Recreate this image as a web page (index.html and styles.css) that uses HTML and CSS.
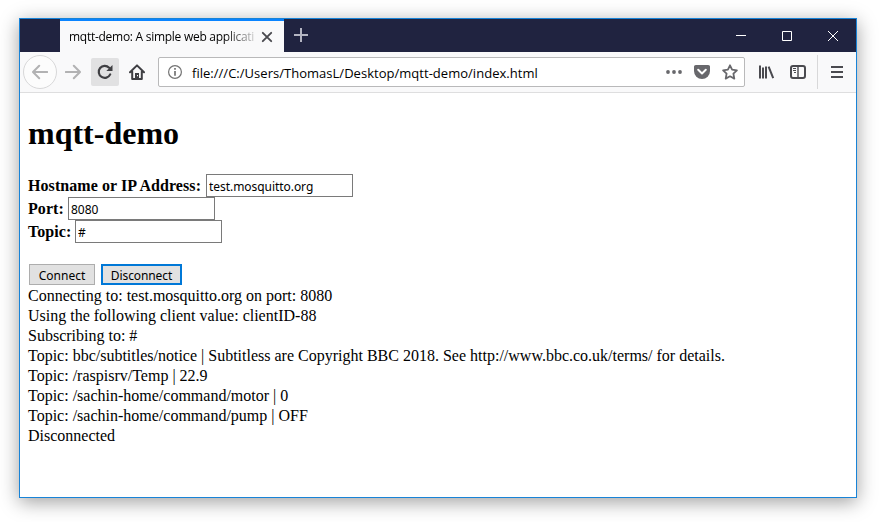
FILE: index.html
```html
<!DOCTYPE html>
<html lang="en">
<head>
<meta charset="utf-8">
<title>mqtt-demo</title>
<link rel="stylesheet" href="styles.css">
</head>
<body>
<div class="window">
  <header class="tabbar">
    <div class="tab">
      <span class="tab-title">mqtt-demo: A simple web applicati</span>
      <svg class="tab-close" width="12" height="12" viewBox="0 0 12 12"><path d="M1.8 1.8l8.4 8.4M10.2 1.8l-8.4 8.4" stroke="#4a4a4f" stroke-width="1.9" stroke-linecap="round"/></svg>
    </div>
    <svg class="new-tab" width="14" height="14" viewBox="0 0 14 14"><path d="M7 0v14M0 7h14" stroke="#b4b5c2" stroke-width="2"/></svg>
    <div class="controls">
      <svg width="10" height="10" viewBox="0 0 10 10"><path d="M0 4.5h10" stroke="#fff"/></svg>
      <svg width="10" height="10" viewBox="0 0 10 10"><path d="M.5.5h9v9h-9z" fill="none" stroke="#fff"/></svg>
      <svg width="10" height="10" viewBox="0 0 10 10"><path d="M0 0l10 10M10 0L0 10" stroke="#fff"/></svg>
    </div>
  </header>
  <nav class="toolbar">
    <div class="back"><svg width="16" height="16" viewBox="0 0 16 16"><path d="M15.2 8H1.2M7.2 1.8L1 8l6.2 6.2" class="arrow"/></svg></div>
    <div class="forward"><svg width="16" height="16" viewBox="0 0 16 16"><path d="M.8 8h14M8.8 1.8L15 8l-6.2 6.2" class="arrow"/></svg></div>
    <div class="reload"><svg width="16" height="16" viewBox="0 0 16 16"><path d="M13.2 10.4A6 6 0 1 1 12.1 3.7" fill="none" stroke="#3f3f43" stroke-width="2.2" stroke-linecap="round"/><path d="M15.5 1v6.1H9.3z" fill="#3f3f43"/></svg></div>
    <div class="home"><svg width="16" height="16" viewBox="0 0 16 16"><path d="M1 8.3L8 1.4l7 6.9M3.2 7.5V15h9.6V7.5" fill="none" stroke="#3f3f43" stroke-width="2" stroke-linecap="round" stroke-linejoin="round"/><path d="M6 9h4v6H6z" fill="#3f3f43"/><path d="M8 11h1v1.3H8z" fill="#fff"/></svg></div>
    <div class="urlbar">
      <svg class="info" width="14" height="14" viewBox="0 0 14 14"><circle cx="7" cy="7" r="6.4" fill="none" stroke="#737373" stroke-width="1.2"/><path d="M7 6v4.8M7 3v1.8" stroke="#737373" stroke-width="1.7"/></svg>
      <span class="url">file:///C:/Users/ThomasL/Desktop/mqtt-demo/index.html</span>
      <svg class="dots" width="16" height="16" viewBox="0 0 16 16"><g fill="#68686c"><circle cx="2" cy="8" r="1.9"/><circle cx="8" cy="8" r="1.9"/><circle cx="14" cy="8" r="1.9"/></g></svg>
      <svg class="pocket" width="16" height="16" viewBox="0 0 16 16"><path d="M1.8 1h12.4C15.3 1 16 1.7 16 2.8V7a8 8 0 0 1-16 0V2.8C0 1.7.7 1 1.8 1z" fill="#68686c"/><path d="M4.2 5.8L8 9.4l3.8-3.6" fill="none" stroke="#fff" stroke-width="2" stroke-linecap="round" stroke-linejoin="round"/></svg>
      <svg class="star" width="16" height="16" viewBox="0 0 16 16"><path d="M8 1.3l2.1 4.3 4.8.7-3.5 3.4.9 4.9L8 12.3l-4.3 2.3.9-4.9L1.1 6.3l4.8-.7z" fill="none" stroke="#68686c" stroke-width="1.8" stroke-linejoin="round"/></svg>
    </div>
    <svg class="library" width="16" height="16" viewBox="0 0 16 16"><path d="M1 1.5v13M4 3.5v11M7 2.5v12M9.6 2.6l4.6 11.6" fill="none" stroke="#4a4a4f" stroke-width="2"/></svg>
    <svg class="sidebar" width="16" height="16" viewBox="0 0 16 16"><rect x="1" y="2" width="14" height="12" rx="2" fill="none" stroke="#4a4a4f" stroke-width="2"/><path d="M8 2v12" stroke="#4a4a4f" stroke-width="1.4"/><path d="M3 4.5h3M3 6.5h3M4 8.5h2" stroke="#4a4a4f"/></svg>
    <div class="menu"><svg width="12" height="12" viewBox="0 0 12 12"><path d="M0 1h12M0 6h12M0 11h12" stroke="#4a4a4f" stroke-width="2"/></svg></div>
  </nav>
  <main class="page">
    <h1>mqtt-demo</h1>
    <form>
      <div class="field"><label class="label-host" for="host">Hostname or IP Address:</label><input id="host" class="host" value="test.mosquitto.org"></div>
      <div class="field"><label class="label-port" for="port">Port:</label><input id="port" value="8080"></div>
      <div class="field"><label class="label-topic" for="topic">Topic:</label><input id="topic" value="#"></div>
      <div class="buttons">
        <button type="button" class="connect">Connect</button>
        <button type="button" class="disconnect">Disconnect</button>
      </div>
    </form>
    <div class="log">
      <div>Connecting to: test.mosquitto.org on port: 8080</div>
      <div>Using the following client value: clientID-88</div>
      <div>Subscribing to: #</div>
      <div>Topic: bbc/subtitles/notice | Subtitless are Copyright BBC 2018. See http://www.bbc.co.uk/terms/ for details.</div>
      <div>Topic: /raspisrv/Temp | 22.9</div>
      <div>Topic: /sachin-home/command/motor | 0</div>
      <div>Topic: /sachin-home/command/pump | OFF</div>
      <div>Disconnected</div>
    </div>
  </main>
</div>
</body>
</html>
```
FILE: styles.css
```css
* { box-sizing: border-box; }
body {
  margin: 0;
  padding: 18px 23px 24px 19px;
  height: 522px;
  background: #fff;
  overflow: hidden;
  font-family: "Open Sans", "Noto Sans", sans-serif;
  color: #000;
}
svg { display: block; flex: none; }
.window {
  width: 838px;
  height: 480px;
  border: 1px solid #1883d7;
  background: #fff;
  box-shadow: 0 4px 18px rgba(0, 0, 0, .38);
}
.tabbar { display: flex; height: 33px; background: #202340; padding-left: 40px; }
.tab {
  display: flex;
  align-items: center;
  width: 224px;
  padding: 0 11px 0 9px;
  background: #f9f9fa;
  border-top: 2px solid #0a84ff;
}
.tab-title {
  width: 188px;
  white-space: nowrap;
  font-size: 12px;
  line-height: 18px;
  letter-spacing: -.27px;
  -webkit-mask-image: linear-gradient(to right, #000 155px, transparent 192px);
  mask-image: linear-gradient(to right, #000 155px, transparent 192px);
}
.tab-close { margin-left: 4px; }
.new-tab { margin: 9px 0 0 10px; }
.controls { display: flex; gap: 36px; margin: 12px 18px 0 auto; }
.toolbar {
  display: flex;
  align-items: center;
  height: 41px;
  padding-left: 3px;
  background: #f9f9fa;
  border-bottom: 1px solid #dededf;
}
.toolbar > div:not(.urlbar) { display: flex; align-items: center; justify-content: center; flex: none; }
.arrow { fill: none; stroke: #b2b2b3; stroke-width: 2; stroke-linecap: round; stroke-linejoin: round; }
.back { width: 34px; height: 34px; border: 1px solid #d8d8d9; border-radius: 50%; background: #fcfcfc; }
.forward { width: 32px; }
.reload { width: 28px; height: 28px; margin-left: 2px; border-radius: 2px; background: #e1e1e2; }
.home { width: 36px; }
.urlbar {
  display: flex;
  align-items: center;
  width: 587px;
  height: 30px;
  margin-left: 3px;
  padding: 0 6px 0 9px;
  border: 1px solid #b9b9ba;
  border-radius: 2px;
  background: #fff;
}
.url { margin-left: 10px; padding-top: 2px; font-size: 13px; line-height: 20px; letter-spacing: .025px; white-space: nowrap; }
.dots { margin-left: auto; }
.pocket, .star { margin-left: 12px; }
.library { margin-left: 14px; }
.sidebar { margin-left: 15px; }
.menu { width: 39px; height: 34px; margin-left: 11px; border-left: 1px solid #d8d8d9; }
.page { padding: 0 8px; font-family: "Liberation Serif", serif; font-size: 16px; }
h1 { margin: 21px 0 22px; font-size: 32px; line-height: 38px; }
.field { display: flex; height: 23px; }
.field label { line-height: 24px; font-weight: bold; letter-spacing: .07px; white-space: nowrap; }
.label-host { width: 178px; }
.label-port { width: 40px; }
.label-topic { width: 47px; }
input {
  width: 147px;
  height: 23px;
  margin: 0;
  padding: 2px 2px 0;
  border: 1px solid #7a7a7a;
  border-radius: 0;
  background: #fff;
  font: 12px "Noto Sans", sans-serif;
  letter-spacing: -.05px;
  outline: none;
}
.buttons { display: flex; gap: 6px; margin: 21px 0 0 1px; }
button {
  height: 21px;
  padding: 2px 0 0;
  border: 1px solid #adadad;
  border-radius: 0;
  background: #e1e1e1;
  color: #000;
  font: 12px/16px "Noto Sans", sans-serif;
}
.connect { width: 66px; }
.disconnect { width: 81px; border: 2px solid #0078d7; padding-top: 2px; letter-spacing: -.1px; }
.log { margin-top: 1px; line-height: 20px; white-space: nowrap; }
```
